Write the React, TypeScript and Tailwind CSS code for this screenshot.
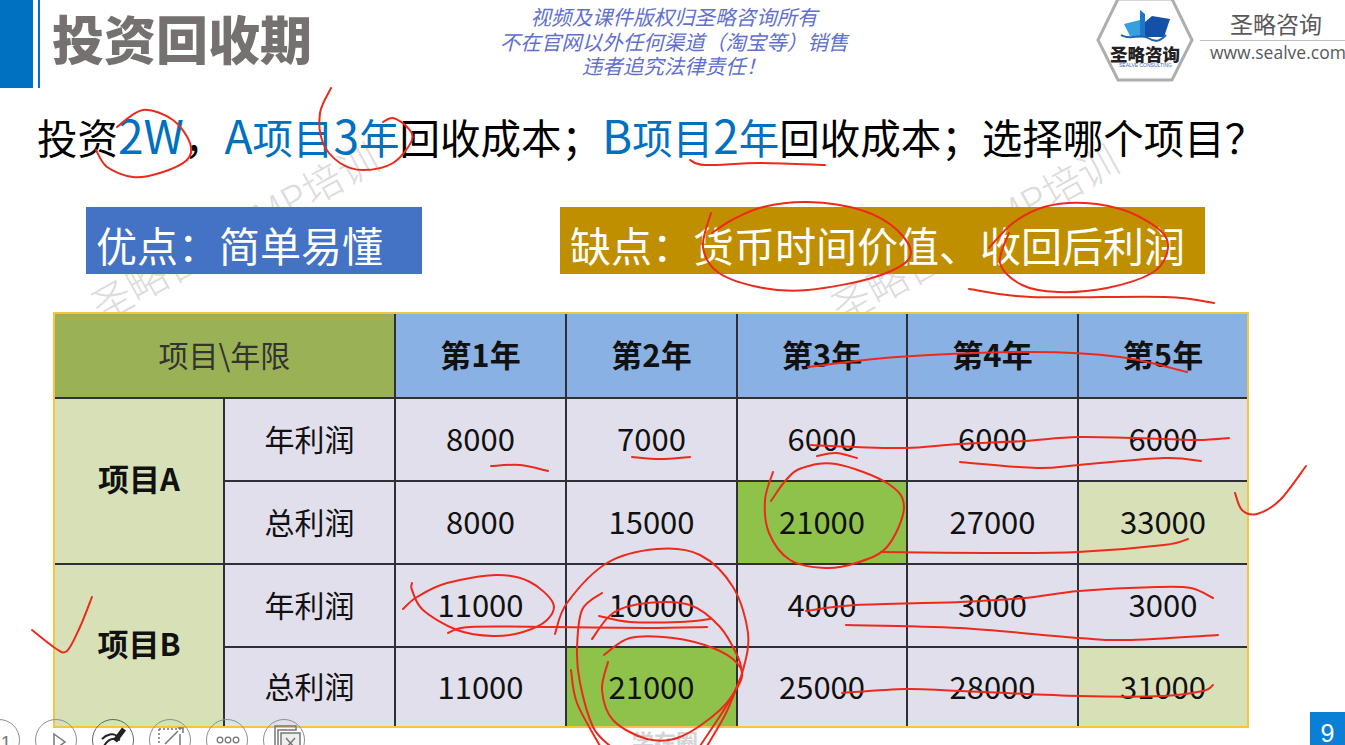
import React from "react";

const FONT = "font-['Noto_Sans_CJK_SC','Noto_Sans',sans-serif]";

const years = ["第1年", "第2年", "第3年", "第4年", "第5年"];

type Pt = [number, number];

// pen strokes traced from the slide, smoothed below
const strokes: Pt[][] = [
  [[96, 150], [107, 167], [133, 177], [160, 173], [187, 160], [190, 143], [173, 120], [143, 110], [117, 127]],
  [[331, 88], [320, 113], [323, 143], [340, 163], [363, 170], [393, 163], [412, 140], [407, 127], [393, 118], [383, 122]],
  [[690, 160], [705, 165], [760, 163], [825, 165]],
  [[711, 213], [703, 247], [719, 273], [763, 288], [808, 290], [875, 277], [910, 257], [897, 230], [861, 210], [808, 202], [763, 207], [732, 220], [712, 233]],
  [[989, 248], [1013, 223], [1044, 207], [1085, 203], [1129, 212], [1163, 233], [1167, 253], [1152, 273], [1107, 288], [1058, 292], [1022, 285], [1000, 263], [1009, 233]],
  [[969, 289], [1031, 297], [1165, 297], [1214, 303]],
  [[808, 367], [897, 357], [1031, 352], [1120, 357], [1187, 372]],
  [[491, 466], [520, 465], [548, 471]],
  [[632, 457], [660, 459], [690, 457]],
  [[817, 456], [836, 453], [857, 458]],
  [[811, 445], [856, 447], [906, 448], [960, 444], [1025, 441], [1079, 437], [1164, 439], [1199, 440], [1229, 438]],
  [[960, 462], [1037, 468], [1079, 465], [1164, 458], [1201, 461]],
  [[773, 472], [765, 500], [769, 533], [790, 560], [825, 568], [856, 563], [887, 547], [904, 507], [887, 483], [836, 464], [802, 468], [786, 480], [771, 501]],
  [[881, 552], [987, 553], [1078, 552], [1164, 545], [1188, 539]],
  [[1306, 466], [1280, 500], [1257, 514], [1242, 510], [1235, 493]],
  [[403, 609], [417, 597], [447, 583], [497, 575], [530, 582], [553, 603], [547, 620], [523, 632], [493, 636], [457, 630], [423, 610], [412, 590], [412, 583]],
  [[448, 633], [470, 627], [553, 627], [647, 628], [707, 627]],
  [[555, 634], [567, 603], [607, 563], [657, 549], [700, 555], [733, 587], [748, 633], [743, 670], [730, 700], [700, 746]],
  [[602, 593], [582, 610], [577, 650], [580, 683], [593, 727], [610, 746]],
  [[571, 670], [577, 703], [600, 746]],
  [[599, 616], [630, 622], [680, 622], [710, 619]],
  [[592, 639], [613, 613], [647, 603], [690, 605], [720, 627], [738, 657], [742, 673]],
  [[604, 655], [630, 638], [673, 638], [713, 648], [737, 663], [741, 680], [720, 710], [680, 737], [647, 739], [613, 720], [602, 690], [608, 662]],
  [[737, 687], [725, 715], [707, 746]],
  [[806, 611], [856, 605], [960, 602], [1025, 598], [1079, 591], [1157, 587], [1191, 588], [1213, 598]],
  [[846, 625], [960, 628], [1079, 638], [1126, 640], [1218, 635]],
  [[842, 693], [906, 689], [960, 691], [1079, 696], [1164, 696], [1203, 691], [1213, 685]],
  [[92, 597], [80, 627], [67, 651], [55, 648], [32, 630]],
];

function smooth(pts: Pt[]) {
  let d = `M${pts[0][0]} ${pts[0][1]}`;
  for (let i = 0; i < pts.length - 1; i++) {
    const p0 = pts[Math.max(i - 1, 0)];
    const p1 = pts[i];
    const p2 = pts[i + 1];
    const p3 = pts[Math.min(i + 2, pts.length - 1)];
    const c1x = p1[0] + (p2[0] - p0[0]) / 6;
    const c1y = p1[1] + (p2[1] - p0[1]) / 6;
    const c2x = p2[0] - (p3[0] - p1[0]) / 6;
    const c2y = p2[1] - (p3[1] - p1[1]) / 6;
    d += `C${c1x} ${c1y} ${c2x} ${c2y} ${p2[0]} ${p2[1]}`;
  }
  return d;
}

function Cell({ className, children }: { className: string; children?: React.ReactNode }) {
  return (
    <div className={`flex items-center justify-center border-[#2f2f38] text-[#111] ${className}`}>
      {children}
    </div>
  );
}

const num = "text-[31px] leading-none pb-[4px]";
const label = "text-[30px] leading-none pb-[4px] text-[#3a3a3a] border-t-2 border-r-2";
const head = "text-[31px] leading-none pb-[4px] font-bold";
const group = "text-[31px] leading-none pb-[7px] font-bold bg-[#d8e0b8] border-t-2 border-r-2";

function Logo() {
  return (
    <div className="relative w-[98px] h-[82px] shrink-0">
      <svg viewBox="0 0 98 82" className="w-full h-full">
        <polygon points="22,-1 76,-1 96,40 76,80 22,80 2,40" fill="#fff" stroke="#aeaeae" strokeWidth="3" />
        <polygon points="28,24 44,20 44,36 34,36" fill="#35a0e0" />
        <polygon points="44,10 49,14 49,36 44,36" fill="#1e78c8" />
        <polygon points="49,22 56,16 74,19 68,37 49,37" fill="#1450a8" />
        <path d="M25 35C34 41 44 33 52 38S64 41 70 35" fill="none" stroke="#1c62b8" strokeWidth="2" />
      </svg>
      <div className="absolute left-[14px] top-[45px] text-[17.5px] leading-none font-black text-[#222] whitespace-nowrap">
        圣略咨询
      </div>
      <div className="absolute left-[23px] top-[63px] text-[5px] leading-none text-[#3a6ab0] whitespace-nowrap font-['Liberation_Sans',sans-serif]">
        SEALVE CONSULTING
      </div>
    </div>
  );
}

function Controls() {
  const circle = "w-[42px] h-[42px] rounded-full border border-[#8f8f8f] relative";
  return (
    <div className="absolute left-[-22px] top-[719px] flex gap-[15px]">
      <div className={circle}>
        <span className="absolute left-[22px] top-[14px] text-[18px] leading-none text-[#777] font-['Liberation_Sans',sans-serif]">1</span>
      </div>
      <div className={circle}>
        <svg className="absolute inset-0" width="42" height="42" fill="none" stroke="#777" strokeWidth="1.5">
          <path d="M18 14L29 22L18 30Z" />
        </svg>
      </div>
      <div className={`${circle} border-[#666]`}>
        <svg className="absolute inset-0" width="42" height="42" fill="none" stroke="#222">
          <path d="M22 21L31 9" strokeWidth="5" />
          <path d="M9 19C14 14 20 13 24 16M11 26C15 19 20 17 27 20" strokeWidth="2" />
        </svg>
      </div>
      <div className={circle}>
        <svg className="absolute inset-0" width="42" height="42" fill="none" stroke="#777">
          <path d="M9 9H33M9 9V30" strokeWidth="1.5" strokeDasharray="2 2" />
          <path d="M15 24L28 11M28 8H33V13M30 14V30" strokeWidth="1.5" />
        </svg>
      </div>
      <div className={circle}>
        <svg className="absolute inset-0" width="42" height="42" fill="none" stroke="#777" strokeWidth="1.3">
          <circle cx="13" cy="20" r="2.8" />
          <circle cx="21" cy="20" r="2.8" />
          <circle cx="29" cy="20" r="2.8" />
        </svg>
      </div>
      <div className={circle}>
        <svg className="absolute inset-0" width="42" height="42" fill="none" stroke="#777" strokeWidth="1.5">
          <path d="M11 6H32V10H14V28H11Z" />
          <rect x="17" y="13" width="19" height="20" fill="#eee" />
          <path d="M22 18L31 28M31 18L22 28" />
        </svg>
      </div>
    </div>
  );
}

export default function App() {
  return (
    <div className={`relative isolate w-[1345px] h-[745px] overflow-hidden bg-white flex flex-col ${FONT}`}>
      {/* watermarks sit under the slide content */}
      <div className="absolute left-[73px] top-[208px] w-[330px] text-[40px] leading-none font-light text-[#dcdcdc] -rotate-[29deg] whitespace-nowrap -z-10">圣略咨询PMP培训</div>
      <div className="absolute left-[813px] top-[210px] w-[330px] text-[40px] leading-none font-light text-[#dcdcdc] -rotate-[29deg] whitespace-nowrap -z-10">圣略咨询PMP培训</div>

      <div className="flex h-[88px] shrink-0">
        <div className="w-[33px] bg-[#0070c0]" />
        <div className="w-[2px] ml-[5px] bg-[#0070c0]" />
        <h1 className="ml-[12px] w-[330px] text-[52px] leading-[76px] font-black text-[#767171] whitespace-nowrap">投资回收期</h1>
        <div className="w-[440px] ml-[72px] pt-[4px] text-center italic text-[20.5px] leading-[24.5px] text-[#5f70cf] whitespace-nowrap">
          <p>视频及课件版权归圣略咨询所有</p>
          <p>不在官网以外任何渠道（淘宝等）销售</p>
          <p>违者追究法律责任！</p>
        </div>
        <div className="ml-[202px]"><Logo /></div>
        <div className="flex-1 ml-[6px] flex flex-col min-w-0">
          <div className="h-[41px] pt-[8px] pl-[30px] text-[23px] leading-[30px] text-[#595959] border-b border-[#bdbdbd] whitespace-nowrap">圣略咨询</div>
          <div className="pl-[10px] text-[17.5px] leading-[22px] text-[#595959] whitespace-nowrap font-['Open_Sans',sans-serif]">www.sealve.com</div>
        </div>
      </div>

      <div className="h-[119px] shrink-0 pl-[37px] pt-[19px] text-[40.5px] leading-[54px] text-black whitespace-nowrap">
        投资<span className="text-[#0070c0] text-[46px]">2W</span>，<span className="text-[#0070c0]"><span className="text-[46px]">A</span>项目<span className="text-[46px]">3</span>年</span>回收成本；<span className="text-[#0070c0]"><span className="text-[46px]">B</span>项目<span className="text-[46px]">2</span>年</span>回收成本；选择哪个项目？
      </div>

      <div className="flex h-[67px] shrink-0 text-white text-[41px] leading-[74px] whitespace-nowrap">
        <div className="ml-[86px] w-[336px] pl-[10px] bg-[#4472c4]">优点：简单易懂</div>
        <div className="ml-[138px] w-[645px] pl-[10px] bg-[#bf8f00]">缺点：货币时间价值、收回后利润</div>
      </div>

      <div className="ml-[53px] mt-[38px] w-[1196px] h-[416px] border-2 border-[#f5c542] bg-[#e2dfec] grid grid-cols-[170px_171px_171px_171px_170px_171px_168px] grid-rows-[83px_83px_83px_83px_80px]">
        <Cell className="col-span-2 bg-[#9bb155] text-[30px] leading-none pb-[4px] text-[#333] border-r-2">项目\年限</Cell>
        {years.map((y, i) => (
          <Cell key={y} className={`bg-[#8ab1e4] ${head} ${i < 4 ? "border-r-2" : ""}`}>{y}</Cell>
        ))}

        <Cell className={`row-span-2 ${group}`}>项目A</Cell>
        <Cell className={label}>年利润</Cell>
        {["8000", "7000", "6000", "6000", "6000"].map((v, i) => (
          <Cell key={i} className={`${num} border-t-2 ${i < 4 ? "border-r-2" : ""}`}>{v}</Cell>
        ))}
        <Cell className={label}>总利润</Cell>
        <Cell className={`${num} border-t-2 border-r-2`}>8000</Cell>
        <Cell className={`${num} border-t-2 border-r-2`}>15000</Cell>
        <Cell className={`${num} border-t-2 border-r-2 bg-[#8fc24a]`}>21000</Cell>
        <Cell className={`${num} border-t-2 border-r-2`}>27000</Cell>
        <Cell className={`${num} border-t-2 bg-[#d8e0b8]`}>33000</Cell>

        <Cell className={`row-span-2 ${group}`}>项目B</Cell>
        <Cell className={label}>年利润</Cell>
        {["11000", "10000", "4000", "3000", "3000"].map((v, i) => (
          <Cell key={i} className={`${num} border-t-2 ${i < 4 ? "border-r-2" : ""}`}>{v}</Cell>
        ))}
        <Cell className={label}>总利润</Cell>
        <Cell className={`${num} border-t-2 border-r-2`}>11000</Cell>
        <Cell className={`${num} border-t-2 border-r-2 bg-[#8fc24a]`}>21000</Cell>
        <Cell className={`${num} border-t-2 border-r-2`}>25000</Cell>
        <Cell className={`${num} border-t-2 border-r-2`}>28000</Cell>
        <Cell className={`${num} border-t-2 bg-[#d8e0b8]`}>31000</Cell>
      </div>

      <div className="absolute left-[632px] top-[729px] text-[22px] leading-none font-bold text-[#d4d4d4] whitespace-nowrap">学在圈</div>

      {/* pen annotations */}
      <svg className="absolute inset-0 pointer-events-none" width="1345" height="745" viewBox="0 0 1345 745" fill="none">
        {strokes.map((pts, i) => (
          <path key={i} d={smooth(pts)} stroke="#ec2a1c" strokeWidth="2" strokeLinecap="round" />
        ))}
      </svg>

      <Controls />

      <div className="absolute right-0 top-[712px] w-[35px] h-[33px] bg-[#0a7fd6] text-white text-[25px] leading-[42px] text-center font-['Liberation_Sans',sans-serif]">9</div>
    </div>
  );
}
